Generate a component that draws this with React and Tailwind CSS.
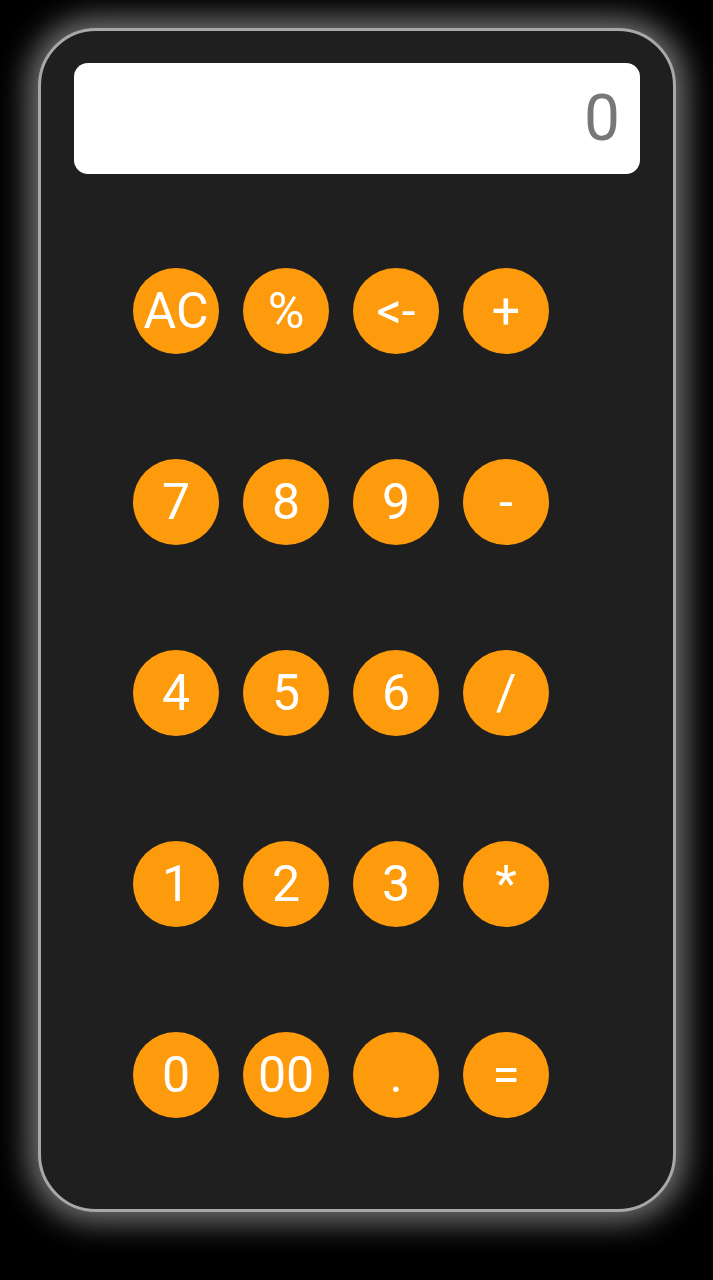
import React, { useState } from 'react';

const rows = [
    ['AC', '%', '<-', '+'],
    ['7', '8', '9', '-'],
    ['4', '5', '6', '/'],
    ['1', '2', '3', '*'],
    ['0', '00', '.', '='],
];

const App = () => {
    const [value] = useState('0');

    return (
        <div
            className="min-h-screen w-full bg-black pt-[28px] pl-[38px]"
            style={{ fontFamily: 'Roboto, "Liberation Sans", sans-serif' }}
        >
            {/* Calculator body */}
            <div className="w-[638px] h-[1184px] rounded-[58px] bg-[#1f1f1f] border-[3px] border-[#a8a8a8] shadow-[0_0_30px_10px_rgba(255,255,255,0.45)] pt-[32px] px-[33px]">
                {/* Display */}
                <div className="h-[111px] rounded-[14px] bg-white flex items-center justify-end pr-[20px]">
                    <span className="text-[64px] leading-none text-[#777777]">{value}</span>
                </div>

                {/* Keys */}
                <div className="mt-[94px] pl-[59px] flex flex-col gap-[105px]">
                    {rows.map((row, r) => (
                        <div key={r} className="flex gap-[24px]">
                            {row.map(key => (
                                <button
                                    key={key}
                                    className="w-[86px] h-[86px] rounded-full bg-[#fe9b0c] text-white text-[50px] leading-none flex items-center justify-center"
                                >
                                    {key}
                                </button>
                            ))}
                        </div>
                    ))}
                </div>
            </div>
        </div>
    );
};

export default App;
